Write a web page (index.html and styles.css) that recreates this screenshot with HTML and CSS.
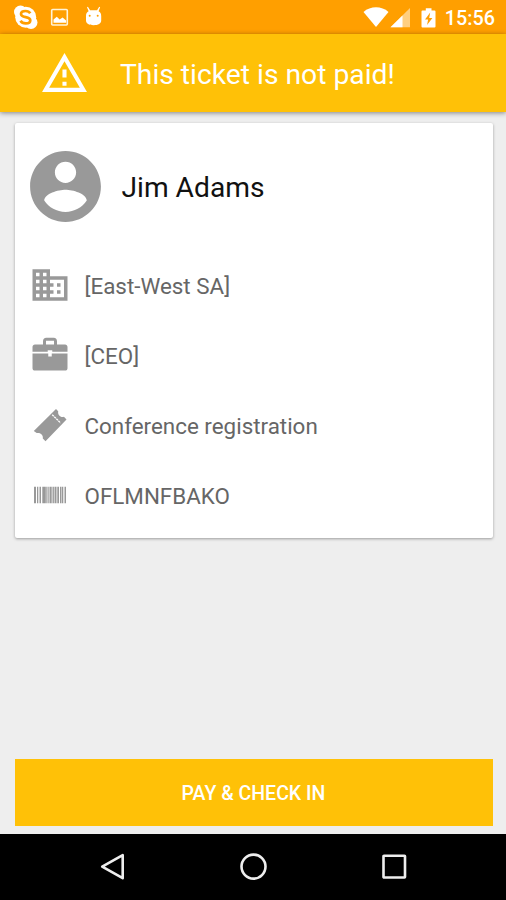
FILE: index.html
```html
<!DOCTYPE html>
<html lang="en">
<head>
<meta charset="utf-8">
<title>Ticket check-in</title>
<link rel="stylesheet" href="styles.css">
</head>
<body>
<div class="screen">
  <div class="status">
    <svg class="status-left" viewBox="0 0 104 34" width="104" height="34">
      <g fill="#fff">
        <circle cx="20.500" cy="12" r="6.500"/><circle cx="31" cy="22.500" r="6.500"/><circle cx="25.700" cy="17.200" r="10.500"/>
      </g>
      <path d="M30.300 13.300c-1-1.600-2.600-2.300-4.800-2.300-2.700 0-4.500 1.200-4.500 3 0 4.300 9.300 2 9.300 6.200 0 2-1.900 3.200-4.600 3.200-2.400 0-4.200-.9-5.200-2.600" fill="none" stroke="#ff9f00" stroke-width="2.700"/>
      <rect x="51.700" y="9.500" width="15.600" height="15.500" rx="1" fill="none" stroke="#fff3d8" stroke-width="1.600"/>
      <path d="M53.500 22.800v-3.300l3.300-2.700 2.800 2.600 3-1.800 3.500 3v2.200z" fill="#fff"/>
      <path d="M86 16c0-2.500 1-4 2.600-4.800L87 7.200l.9-.4 2.200 3.500h7L99.200 6.800l.9.400-1.500 4c1.700.9 2.600 2.300 2.600 4.800v4.500c0 3-3 4.700-7.600 4.700S86 23.500 86 20.500z" fill="#fff"/>
      <circle cx="89.700" cy="15.800" r="1" fill="#ff9f00"/><circle cx="97.700" cy="15.800" r="1" fill="#ff9f00"/>
    </svg>
    <div class="status-right">
      <svg viewBox="0 0 76 34" width="76" height="34">
        <path d="M0.500 12C7.500 5.800 18.500 5.800 25.500 12L13 27z" fill="#fff"/>
        <path d="M47 8v19.200H27.500z" fill="#ffcf80"/><path d="M39.500 15.400v11.800h-12z" fill="#fff"/>
        <path d="M59.500 10.500h3.300V8.300h5.700v2.200H71.500q1 0 1 1V26.500q0 1-1 1H59.500q-1 0-1-1V11.500q0-1 1-1z" fill="#fff"/>
        <path d="M67.200 12.500l-5.200 7h3.100l-1 5.600 5.300-7.200h-3.200z" fill="#ff9f00"/>
      </svg>
      <span class="clock">15:56</span>
    </div>
  </div>
  <header class="banner">
    <svg class="warn" viewBox="0 0 24 24" fill="#fff"><path d="M12 5.990L19.530 19H4.470L12 5.990M12 2L1 21h22L12 2zm1 14h-2v2h2v-2zm0-6h-2v4h2v-4z"/></svg>
    <span class="banner-text">This ticket is not paid!</span>
  </header>
  <main class="content">
    <section class="card">
      <div class="person">
        <svg class="avatar" viewBox="0 0 24 24"><path d="M12 2C6.480 2 2 6.480 2 12s4.480 10 10 10 10-4.480 10-10S17.520 2 12 2zm0 3c1.660 0 3 1.340 3 3s-1.340 3-3 3-3-1.340-3-3 1.340-3 3-3zm0 14.200c-2.500 0-4.710-1.280-6-3.220.03-1.990 4-3.080 6-3.080 1.990 0 5.970 1.090 6 3.080-1.290 1.940-3.500 3.220-6 3.220z"/></svg>
        <span class="name">Jim Adams</span>
      </div>
      <div class="row">
        <svg class="icon" viewBox="0 0 24 24"><path d="M12 7V3H2v18h20V7H12zM6 19H4v-2h2v2zm0-4H4v-2h2v2zm0-4H4V9h2v2zm0-4H4V5h2v2zm4 12H8v-2h2v2zm0-4H8v-2h2v2zm0-4H8V9h2v2zm0-4H8V5h2v2zm10 12h-8v-2h2v-2h-2v-2h2v-2h-2V9h8v10zm-2-8h-2v2h2v-2zm0 4h-2v2h2v-2z"/></svg>
        <span class="label">[East-West SA]</span>
      </div>
      <div class="row">
        <svg class="icon" viewBox="0 0 24 24"><path d="M2 11.100h9v1.700h2v-1.700h9V19.500c0 .8-.6 1.400-1.400 1.400H3.400C2.600 20.900 2 20.300 2 19.500zM3.400 6H8V4.100C8 2.900 8.700 2.200 9.900 2.200h4.200c1.200 0 1.900.7 1.900 1.900V6h4.600c.8 0 1.400.6 1.400 1.400v2.700h-8.700v-.8h-2.600v.8H2V7.400C2 6.600 2.600 6 3.400 6zm6.300 0h4.600V3.900H9.700z"/></svg>
        <span class="label">[CEO]</span>
      </div>
      <div class="row">
        <svg class="icon" viewBox="0 0 42 42"><path d="M4.800 27L27 5.100l2.200 2.100c-.7 3.800 2.200 6.500 5.700 5.600l2.600 2.800L16.500 37.300l-2.700-2.700c.8-3.400-2.400-6.400-6.100-5.500z"/><path d="M23.200 10.700l8.400 8.300" stroke="#fff" stroke-width="1.300" stroke-dasharray="2.200 .7" fill="none"/></svg>
        <span class="label">Conference registration</span>
      </div>
      <div class="row">
        <svg class="icon" viewBox="0 0 42 42"><path d="M5 12.700h2v16.500H5zM8 12.700h1.300v16.500H8zM10.500 12.700h1.500v16.500h-1.500zM13.300 12.700h3.500v16.500h-3.500zM17.300 12.700h1.200v16.500h-1.200zM19.300 12.700h1.200v16.500h-1.200zM21 12.700h1.700v16.500H21zM23.500 12.700h1.400v16.500h-1.400zM25.500 12.700h2v16.500h-2zM28.300 12.700h1.700v16.500h-1.700zM31 12.700h1.500v16.500H31zM33 12.700h1.300v16.500H33zM35.500 12.700h1.500v16.500h-1.500z"/></svg>
        <span class="label">OFLMNFBAKO</span>
      </div>
    </section>
    <button class="pay"><span>PAY &amp; CHECK IN</span></button>
  </main>
  <nav class="nav">
    <svg viewBox="0 0 28 28"><path d="M3.200 13.700L23.700 2.200v23z"/></svg>
    <svg viewBox="0 0 28 28"><circle cx="13.500" cy="13.600" r="12"/></svg>
    <svg viewBox="0 0 28 28"><rect x="3.500" y="2.700" width="21.500" height="21.800" rx=".5"/></svg>
  </nav>
</div>
</body>
</html>
```

FILE: styles.css
```css
* { box-sizing: border-box; }
body { margin: 0; background: #eee; font-family: Roboto, "Liberation Sans", sans-serif; }
.screen { width: 506px; height: 900px; display: flex; flex-direction: column; overflow: hidden; background: #eee; }
svg { display: block; flex: none; }
span { white-space: nowrap; }
.status { height: 34px; flex: none; background: #ff9f00; display: flex; justify-content: space-between; }
.status-right { display: flex; align-items: center; gap: 6px; padding-right: 11px; }
.clock { color: #fff; font-size: 19.800px; font-weight: 500; line-height: 34px; padding-top: 3px; }
.banner { height: 77.500px; flex: none; background: #ffc107; display: flex; align-items: center; padding-left: 40px; gap: 31px; box-shadow: 0 1px 5px rgba(0,0,0,.45); }
.warn { width: 49px; height: 49px; margin-top: 1px; }
.banner-text { color: #fff; font-size: 28.250px; padding-top: 3px; }
.content { flex: 1; display: flex; flex-direction: column; justify-content: space-between; padding: 11.500px 13.500px 8px 14.500px; }
.card { height: 414.500px; background: #fff; border-radius: 2px; box-shadow: 0 1px 3px rgba(0,0,0,.35); padding-top: 20.500px; }
.person { height: 106px; display: flex; align-items: flex-start; padding-left: 8px; gap: 14px; }
.avatar { width: 85px; height: 85px; fill: #999; }
.name { font-size: 28.200px; line-height: 85px; color: #111; padding-top: 1px; }
.row { height: 70.200px; display: flex; align-items: center; padding-left: 14px; gap: 14px; }
.icon { width: 42px; height: 42px; fill: #999; }
.label { font-size: 22.400px; color: #666; padding-top: 2px; }
.pay { height: 67px; border: 0; padding: 2px 0 0; background: #ffc107; color: #fff; font: 500 19.500px Roboto, sans-serif; }
.nav { height: 66.500px; flex: none; background: #000; display: flex; justify-content: space-between; align-items: center; padding: 0 98px 0 99px; }
.nav svg { width: 28px; height: 28px; fill: none; stroke: #eee; stroke-width: 2.600; stroke-linejoin: round; }
```
